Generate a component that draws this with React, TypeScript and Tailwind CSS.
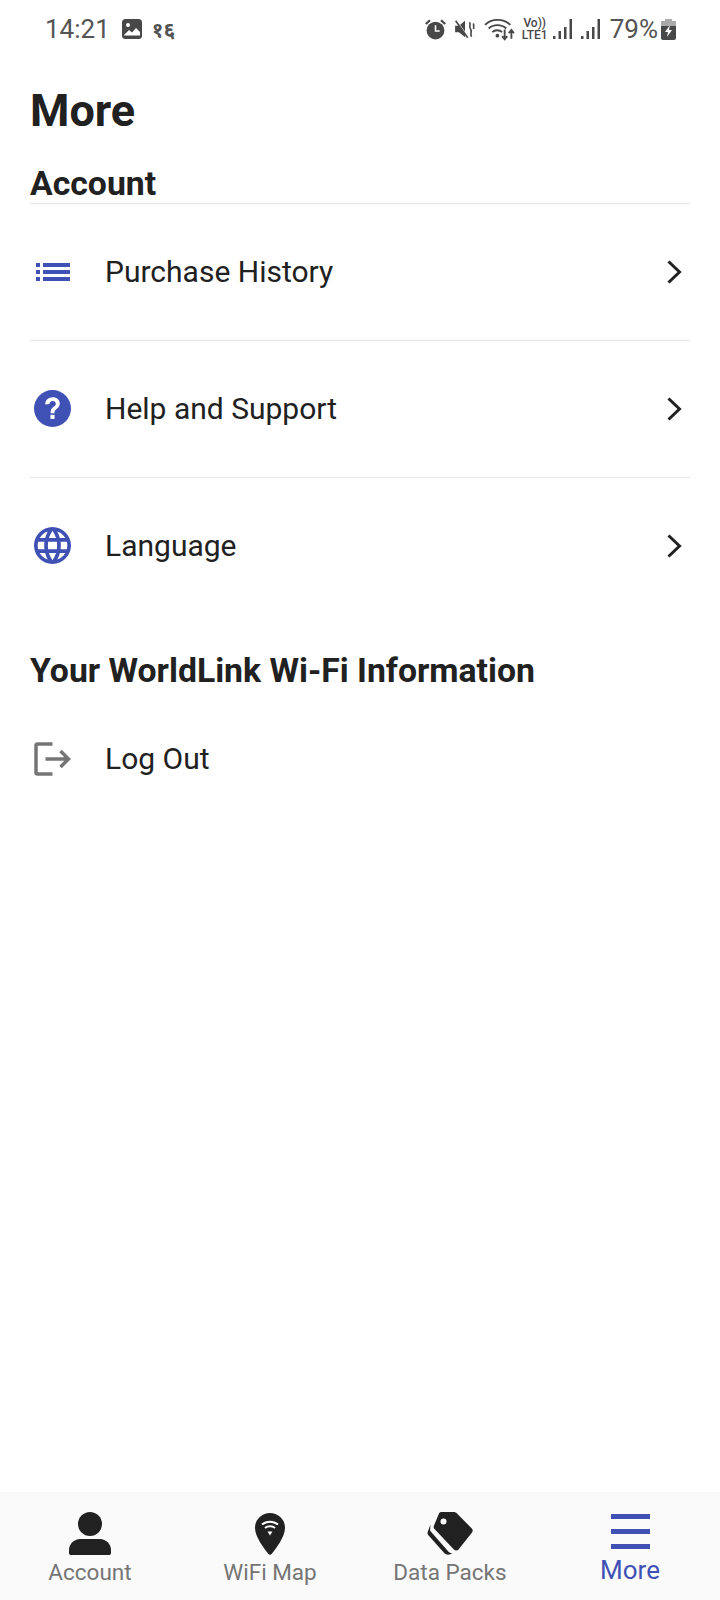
import { FC, ReactNode } from 'react'

const BLUE = '#3f51b5'

const Chevron = () => (
  <svg width="18" height="26" viewBox="0 0 18 26" fill="none" stroke="#212121" strokeWidth="3">
    <path d="M2.5 2.5 L13.5 13 L2.5 23.5" />
  </svg>
)

const ListIcon = () => (
  <svg width="37" height="20" viewBox="0 0 37 20" fill={BLUE}>
    <rect x="2" y="1" width="4" height="4" />
    <rect x="2" y="8" width="4" height="4" />
    <rect x="2" y="15" width="4" height="4" />
    <rect x="9" y="1" width="27" height="4" />
    <rect x="9" y="8" width="27" height="4" />
    <rect x="9" y="15" width="27" height="4" />
  </svg>
)

const HelpIcon = () => (
  <svg width="37" height="37" viewBox="0 0 38 38">
    <circle cx="19" cy="19" r="19" fill={BLUE} />
    <path d="M11.500 15c0-4.500 3.200-7.500 7.700-7.500 4.300 0 7.300 2.800 7.300 6.400 0 2.700-1.500 4.200-3.300 5.600-1.700 1.300-2.200 2.200-2.200 4.300h-4c0-3.300.9-4.800 3-6.500 1.500-1.100 2.400-2 2.400-3.300 0-1.600-1.300-2.800-3.100-2.800-2 0-3.200 1.300-3.500 3.200z" fill="#fff" />
    <rect x="16.900" y="25.500" width="4.200" height="4.200" fill="#fff" />
  </svg>
)

const GlobeIcon = () => (
  <svg width="37" height="37" viewBox="2 2 20 20" fill={BLUE}>
    <path d="M11.990 2C6.470 2 2 6.480 2 12s4.470 10 9.990 10C17.520 22 22 17.520 22 12S17.520 2 11.990 2zm6.930 6h-2.950c-.32-1.250-.78-2.450-1.380-3.560 1.840.63 3.370 1.910 4.330 3.560zM12 4.040c.83 1.200 1.480 2.530 1.910 3.960h-3.820c.43-1.430 1.080-2.760 1.910-3.960zM4.260 14C4.100 13.360 4 12.690 4 12s.1-1.360.26-2h3.380c-.08.66-.14 1.320-.14 2 0 .68.06 1.340.14 2H4.260zm.82 2h2.950c.32 1.250.78 2.450 1.380 3.560-1.840-.63-3.370-1.900-4.330-3.560zm2.950-8H5.080c.96-1.660 2.490-2.930 4.330-3.560C8.810 5.550 8.350 6.750 8.030 8zM12 19.960c-.83-1.200-1.480-2.530-1.910-3.960h3.820c-.43 1.430-1.080 2.760-1.910 3.960zM14.340 14H9.660c-.09-.66-.16-1.320-.16-2 0-.68.07-1.350.16-2h4.680c.09.65.16 1.320.16 2 0 .68-.07 1.340-.16 2zm.25 5.560c.6-1.110 1.060-2.310 1.380-3.560h2.950c-.96 1.650-2.490 2.930-4.330 3.560zM16.360 14c.08-.66.14-1.320.14-2 0-.68-.06-1.340-.14-2h3.380c.16.64.26 1.310.26 2s-.1 1.360-.26 2h-3.380z" />
  </svg>
)

const LogOutIcon = () => (
  <svg width="37" height="34" viewBox="0 0 37 34" fill="none" stroke="#757575" strokeWidth="3.500">
    <path d="M18.500 2H3.500C2.600 2 2 2.600 2 3.500v27c0 .9.6 1.500 1.500 1.500h15" />
    <path d="M11.500 17h23M26.500 9l8 8-8 8" />
  </svg>
)

const PersonIcon = () => (
  <svg width="42" height="44" viewBox="0 0 42 44" fill="#212121">
    <circle cx="21" cy="12" r="12" />
    <path d="M0 38c0-6 5-11 11-11h20c6 0 11 5 11 11v3c0 1.500-1 2-2 2H2c-1 0-2-.5-2-2z" />
  </svg>
)

const PinIcon = () => (
  <svg width="30" height="42" viewBox="0 0 30 42">
    <path d="M15 0C6.700 0 0 6.500 0 14.800 0 24 9 35.500 13.200 40.800c1 1.200 2.600 1.200 3.600 0C21 35.500 30 24 30 14.800 30 6.500 23.300 0 15 0z" fill="#212121" />
    <path d="M7 11.500c4.500-3.800 11.500-3.800 16 0M10 15c2.800-2.300 7.200-2.300 10 0" fill="none" stroke="#fff" strokeWidth="2" />
    <path d="M12.500 18.500h5L15 22.500z" fill="#fff" />
  </svg>
)

const TagsIcon = () => (
  <svg width="46" height="44" viewBox="0 0 46 44" fill="#212121">
    <path d="M12 1.500C12.500.5 13.500 0 14.500 0h12c1.500 0 2.600.5 3.500 1.500l14.800 15c1.200 1.300 1.200 3 0 4.200L31.500 37.500c-1.300 1.300-3.300 1.300-4.600 0L7.500 17c-.7-.7-1-1.700-.8-2.700z" />
    <circle cx="16.500" cy="9.500" r="3" fill="#fafafa" />
    <path d="M3.500 12.500 0.700 20c-.4 1.100-.2 2.300.7 3.200L17 40.800c1.800 2 4.500 2.400 6.800 1.300l1.500-1.100c-1.500.2-2.800-.2-3.800-1.300L3.800 19.500c-.8-1-.8-2-.6-3z" />
  </svg>
)

const MenuIcon = () => (
  <div className="mb-[4px] flex h-[35px] w-[39px] flex-col justify-between">
    <div className="h-[5px] bg-[#3f51b5]" />
    <div className="h-[5px] bg-[#3f51b5]" />
    <div className="h-[5px] bg-[#3f51b5]" />
  </div>
)

const SignalIcon = () => (
  <svg width="20" height="22" viewBox="0 0 20 22" fill="#484848">
    <rect x="0" y="18" width="2.500" height="3" />
    <rect x="5.500" y="13" width="2.500" height="8" />
    <rect x="11" y="9" width="2.500" height="12" />
    <rect x="16.500" y="1" width="2.500" height="20" />
  </svg>
)

const StatusBar = () => (
  <div className="flex h-[58px] items-center pl-[45px] pr-[44px] text-[#545454]">
    <span className="text-[26px] leading-none">14:21</span>
    <svg className="ml-[12px]" width="20" height="20" viewBox="0 0 20 20">
      <rect width="20" height="20" rx="3.500" fill="#484848" />
      <circle cx="6" cy="6" r="2" fill="#fff" />
      <path d="M2 16l5-5 3 2.500L14 9l4 4v3.500H2z" fill="#fff" />
    </svg>
    <span className="ml-[10px] font-['Noto_Sans','Roboto',sans-serif] text-[21px] font-bold leading-none">१६</span>
    <div className="ml-auto flex items-center">
      <svg width="21" height="21" viewBox="0 0 20 20" fill="#484848">
        <circle cx="10" cy="11" r="8.500" />
        <path d="M0 4l4-3.500 1.500 1.500-4 3.500zM20 4L16 .5 14.500 2l4 3.500z" />
        <path d="M10 6v5.500h4" stroke="#fff" strokeWidth="1.500" fill="none" />
      </svg>
      <svg className="ml-[8px]" width="22" height="22" viewBox="0 0 20 20" fill="#484848">
        <path d="M1 7h3.500L10 2.500v15L4.500 13H1z" />
        <path d="M1 1l12 17" stroke="#fff" strokeWidth="1.500" />
        <path d="M1.500 2.500l11 15.500" stroke="#484848" strokeWidth="1.500" />
        <path d="M14 4c2 2-1 3 1 6s-1 4 1 7M17.500 5c1 1.500 0 3 .5 5" stroke="#484848" strokeWidth="1.500" fill="none" />
      </svg>
      <svg className="ml-[8px]" width="31" height="23" viewBox="0 0 30 22" fill="none" stroke="#484848" strokeWidth="1.800">
        <path d="M1 6.500c6-6.500 18-6.500 24.500 0M4.500 10c4.500-4.300 12.500-4.300 17 0M8 13.500c2.500-2.300 7-2.300 9.500 0" />
        <circle cx="13" cy="17" r="1.800" fill="#484848" stroke="none" />
        <path d="M20 11v9M17.500 17.500l2.500 3 2.500-3M26.500 20v-8M24 14.500l2.500-3 2.500 3" />
      </svg>
      <div className="ml-[6px] flex w-[28px] flex-col items-center text-[12px] font-medium leading-[12px] text-[#484848]">
        <span>Vo))</span>
        <span>LTE1</span>
      </div>
      <div className="ml-[4px]">
        <SignalIcon />
      </div>
      <div className="ml-[8px]">
        <SignalIcon />
      </div>
      <span className="ml-[9px] text-[26px] leading-none">79%</span>
      <svg className="ml-[3px]" width="15" height="21" viewBox="0 0 15 21">
        <rect x="4" width="7" height="3" fill="#aaa" />
        <rect y="2" width="15" height="5" fill="#aaa" />
        <path d="M0 7h15v12c0 1-1 2-2 2H2c-1 0-2-1-2-2z" fill="#484848" />
        <path d="M9 6l-5 7h3l-1 5 5-7H8z" fill="#fff" />
      </svg>
    </div>
  </div>
)

type RowProps = { icon: ReactNode; label: string; divider?: boolean }

const Row: FC<RowProps> = ({ icon, label, divider }) => (
  <div className={`flex h-[136.750px] items-center ${divider ? 'border-b border-[#e5e5e5]' : ''}`}>
    <div className="flex w-[75px] items-center pl-[4px]">{icon}</div>
    <span className="flex-1 text-[30px] leading-none text-[#212121]">{label}</span>
    <div className="pr-[6px]">
      <Chevron />
    </div>
  </div>
)

type NavProps = { icon: ReactNode; label: string; active?: boolean }

const NavItem: FC<NavProps> = ({ icon, label, active }) => (
  <div className="flex flex-1 flex-col items-center pt-[19px]">
    <div className="flex h-[45px] items-center justify-center">{icon}</div>
    <span
      className={
        active
          ? 'mt-[-1px] text-[26px] leading-[30px] text-[#3f51b5]'
          : 'mt-[1px] text-[22.500px] leading-[30px] text-[#757575]'
      }
    >
      {label}
    </span>
  </div>
)

export default function App() {
  return (
    <div className="flex h-[1600px] w-[720px] flex-col bg-white font-['Roboto',sans-serif]">
      <StatusBar />

      <main className="flex-1 px-[30px]">
        <h1 className="mt-[27px] text-[45px] font-bold leading-[52px] text-[#212121]">More</h1>

        <h2 className="mt-[29px] border-b border-[#e5e5e5] pb-[1px] text-[33.750px] font-bold leading-[36px] text-[#212121]">
          Account
        </h2>
        <Row icon={<ListIcon />} label="Purchase History" divider />
        <Row icon={<HelpIcon />} label="Help and Support" divider />
        <Row icon={<GlobeIcon />} label="Language" />

        <h2 className="mt-[38.750px] text-[33.750px] font-bold leading-[36px] text-[#212121]">
          Your WorldLink Wi-Fi Information
        </h2>
        <div className="mt-[53px] flex items-center">
          <div className="flex w-[75px] items-center pl-[4px]">
            <LogOutIcon />
          </div>
          <span className="text-[30px] leading-none text-[#212121]">Log Out</span>
        </div>
      </main>

      <nav className="flex h-[108px] bg-[#fafafa]">
        <NavItem icon={<PersonIcon />} label="Account" />
        <NavItem icon={<PinIcon />} label="WiFi Map" />
        <NavItem icon={<TagsIcon />} label="Data Packs" />
        <NavItem icon={<MenuIcon />} label="More" active />
      </nav>
    </div>
  )
}
